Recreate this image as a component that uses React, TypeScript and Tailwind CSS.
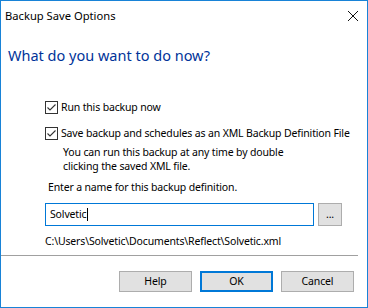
import React from "react";

function Check() {
  return (
    <span className="flex h-[13px] w-[13px] shrink-0 items-center justify-center border border-[#333333] bg-white">
      <svg width="11" height="11" viewBox="0 0 11 11">
        <path d="M1.5 5.5 L4 8 L9.5 2.5" fill="none" stroke="#333333" strokeWidth="1.1" />
      </svg>
    </span>
  );
}

export default function App() {
  return (
    <div
      className="flex h-[308px] w-[368px] flex-col border border-[#1883d7] bg-white text-[10.5px] tracking-[-0.15px] text-black"
      style={{ fontFamily: '"Noto Sans", sans-serif' }}
    >
      <div className="flex h-[29px] items-center justify-between pl-[4px] pr-[9px]">
        <span className="text-[11.2px] leading-none tracking-normal">Backup Save Options</span>
        <svg width="10" height="10" viewBox="0 0 10 10">
          <path d="M0 0 L10 10 M10 0 L0 10" stroke="#111" strokeWidth="1" />
        </svg>
      </div>
      <div className="flex flex-1 flex-col bg-white">
        <div className="pl-[7px] pt-[15px] text-[14.5px] leading-[20px] tracking-normal text-[#003399]">
          What do you want to do now?
        </div>
        <div className="mt-[35px] flex flex-col pl-[44px]">
          <label className="flex h-[14px] items-center gap-[3px]">
            <Check />
            <span className="whitespace-nowrap leading-none">Run this backup now</span>
          </label>
          <label className="mt-[12px] flex h-[14px] items-center gap-[3px]">
            <Check />
            <span className="whitespace-nowrap leading-none">Save backup and schedules as an XML Backup Definition File</span>
          </label>
          <div className="mt-[5px] whitespace-nowrap pl-[18px] leading-[14px]">
            You can run this backup at any time by double
            <br />
            clicking the saved XML file.
          </div>
          <div className="mt-[7px] whitespace-nowrap pl-[3px] leading-[14px]">Enter a name for this backup definition.</div>
          <div className="mt-[9px] flex items-center gap-[4px]">
            <div className="flex h-[23px] w-[269px] items-center border border-[#0078d7] pl-[4px]">
              <span className="leading-none">Solvetic</span>
              <span className="ml-[1px] h-[13px] w-px bg-black" />
            </div>
            <div className="flex h-[23px] w-[24px] items-center justify-center border border-[#adadad] bg-[#e1e1e1] leading-none">
              ...
            </div>
          </div>
          <div className="mt-[8px] whitespace-nowrap leading-[14px]">C:\Users\Solvetic\Documents\Reflect\Solvetic.xml</div>
        </div>
        <div className="mt-[7px] mr-[9px] h-px bg-[#a0a0a0]" />
        <div className="mt-[15px] flex justify-end gap-[8px] pr-[13px]">
          <button className="h-[21px] w-[73px] border border-[#adadad] bg-[#e1e1e1] leading-none">Help</button>
          <button className="h-[21px] w-[73px] border-2 border-[#0078d7] bg-[#e1e1e1] leading-none">OK</button>
          <button className="h-[21px] w-[73px] border border-[#adadad] bg-[#e1e1e1] leading-none">Cancel</button>
        </div>
      </div>
    </div>
  );
}
